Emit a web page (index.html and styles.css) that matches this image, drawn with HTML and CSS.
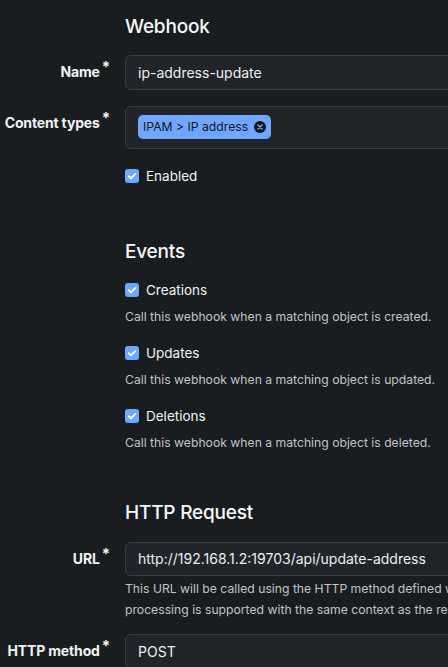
FILE: index.html
```html
<!DOCTYPE html>
<html lang="en">
<head>
<meta charset="utf-8">
<title>Webhook</title>
<link rel="stylesheet" href="styles.css">
</head>
<body>
<div class="page">
  <section class="group group-first">
    <div class="row"><div></div><h2 class="heading">Webhook</h2></div>
    <div class="row field field-first"><label class="label">Name<span class="req">*</span></label>
      <div class="control"><div class="input">ip-address-update</div></div></div>
    <div class="row field"><label class="label">Content types<span class="req">*</span></label>
      <div class="control"><div class="input multi"><span class="badge">IPAM &gt; IP address<svg class="badge-x" viewBox="0 0 12 12" width="12" height="12"><circle cx="6" cy="6" r="6" fill="#111316"/><path d="M4 4 L8 8 M8 4 L4 8" stroke="#6ea8fe" stroke-width="1.6" stroke-linecap="round"/></svg></span></div></div></div>
    <div class="row check-row"><div></div>
      <div class="check"><span class="box"><svg viewBox="0 0 14 14" width="14" height="14"><path d="M3.6 7.2 L6 9.4 L10.4 4.8" fill="none" stroke="#fff" stroke-width="1.7" stroke-linecap="round" stroke-linejoin="round"/></svg></span>Enabled</div></div>
  </section>

  <section class="group group-events">
    <div class="row"><div></div><h2 class="heading">Events</h2></div>
    <div class="row event"><div></div>
      <div>
        <div class="check"><span class="box"><svg viewBox="0 0 14 14" width="14" height="14"><path d="M3.6 7.2 L6 9.4 L10.4 4.8" fill="none" stroke="#fff" stroke-width="1.7" stroke-linecap="round" stroke-linejoin="round"/></svg></span>Creations</div>
        <div class="help help-event">Call this webhook when a matching object is created.</div>
      </div></div>
    <div class="row event"><div></div>
      <div>
        <div class="check"><span class="box"><svg viewBox="0 0 14 14" width="14" height="14"><path d="M3.6 7.2 L6 9.4 L10.4 4.8" fill="none" stroke="#fff" stroke-width="1.7" stroke-linecap="round" stroke-linejoin="round"/></svg></span>Updates</div>
        <div class="help help-event">Call this webhook when a matching object is updated.</div>
      </div></div>
    <div class="row event"><div></div>
      <div>
        <div class="check"><span class="box"><svg viewBox="0 0 14 14" width="14" height="14"><path d="M3.6 7.2 L6 9.4 L10.4 4.8" fill="none" stroke="#fff" stroke-width="1.7" stroke-linecap="round" stroke-linejoin="round"/></svg></span>Deletions</div>
        <div class="help help-event">Call this webhook when a matching object is deleted.</div>
      </div></div>
  </section>

  <section class="group group-http">
    <div class="row"><div></div><h2 class="heading">HTTP Request</h2></div>
    <div class="row field field-url"><label class="label">URL<span class="req">*</span></label>
      <div class="control"><div class="input input-url">http://192.168.1.2:19703/api/update-address</div>
        <div class="help help-url">This URL will be called using the HTTP method defined when the webhook is called. Jinja2 template<br>processing is supported with the same context as the request body.</div></div></div>
    <div class="row field field-method"><label class="label">HTTP method<span class="req">*</span></label>
      <div class="control"><div class="input">POST</div></div></div>
  </section>
</div>
</body>
</html>
```
FILE: styles.css
```css
html, body {
  margin: 0;
  padding: 0;
  background: #1a1d20;
  overflow: hidden;
}
body {
  font-family: Inter, "Noto Sans", "Liberation Sans", sans-serif;
  color: #f1f3f5;
  width: 448px;
  height: 667px;
}
.page {
  width: 900px;
}
.row {
  display: grid;
  grid-template-columns: 110px 720px;
  column-gap: 15px;
}
.heading {
  margin: 0;
  font-size: 19px;
  line-height: 24px;
  font-weight: 500;
  color: #f8f9fa;
  letter-spacing: -0.2px;
}
.group-first { padding-top: 15px; }
.field-first { margin-top: 16px; }
.field + .field { margin-top: 16px; }
.label {
  display: block;
  text-align: right;
  font-weight: 700;
  font-size: 14px;
  line-height: 20px;
  padding-top: 7px;
  white-space: nowrap;
  color: #f1f3f5;
  letter-spacing: -0.15px;
}
.req {
  display: inline-block;
  font-size: 15px;
  line-height: 10px;
  margin-left: 2px;
  vertical-align: 5px;
}
.input {
  box-sizing: border-box;
  height: 35px;
  border: 1px solid #3a3e43;
  border-radius: 6px;
  background: #212428;
  padding: 0 12px;
  font-size: 14px;
  line-height: 33px;
  color: #eceef0;
  white-space: nowrap;
}
.input.multi {
  height: 43px;
  padding: 8px 12px;
  line-height: normal;
}
.badge {
  display: inline-flex;
  align-items: center;
  gap: 6px;
  height: 24px;
  padding: 0 5px 0 5px;
  border-radius: 5px;
  background: #6ea8fe;
  color: #141619;
  font-size: 12.2px;
  line-height: 24px;
}
.check-row { margin-top: 17px; }
.check {
  display: flex;
  align-items: center;
  gap: 7px;
  font-size: 13.5px;
  line-height: 20px;
  color: #f1f3f5;
}
.box {
  display: block;
  width: 14px;
  height: 14px;
  border-radius: 3px;
  background: #6ea8fe;
}
.box svg { display: block; }
.group-events { margin-top: 54px; }
.event { margin-top: 16px; }
.event + .event { margin-top: 16px; }
.help {
  font-size: 12.2px;
  color: #c1c4c7;
  white-space: nowrap;
}
.help-event {
  line-height: 20px;
  margin-top: 7px;
}
.group-http { margin-top: 48px; }
.group-http .field-url { margin-top: 17px; }
.input-url { height: 34px; line-height: 32px; }
.help-url {
  margin-top: 2px;
  line-height: 21px;
}
.field-url + .field-method { margin-top: 14px; }
```
